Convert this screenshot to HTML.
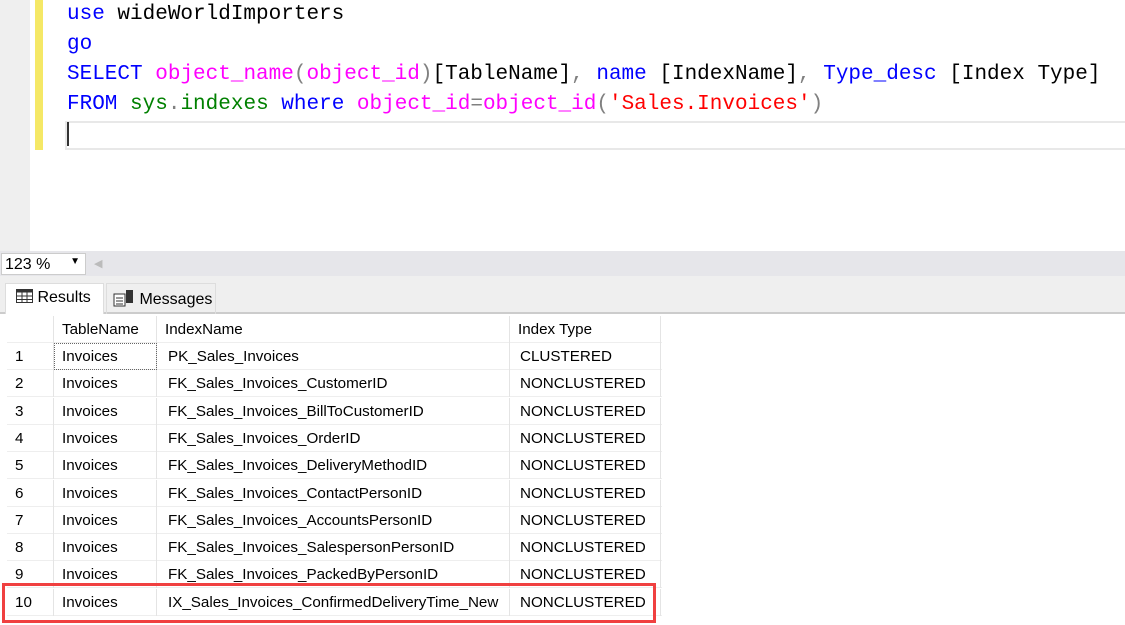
<!DOCTYPE html>
<html><head><meta charset="utf-8"><style>
*{margin:0;padding:0;box-sizing:border-box}
body{width:1125px;height:625px;overflow:hidden;background:#fff;position:relative;font-family:"Liberation Sans",sans-serif}
.gut{position:absolute;left:0;top:0;width:30px;height:251px;background:#efefef}
.yb{position:absolute;left:35px;top:0;width:8px;height:150px;background:#f5e866}
.code{position:absolute;left:67px;font-family:"Liberation Mono",monospace;font-size:21px;line-height:30px;white-space:pre;color:#000}
.k{color:#0000ff}.f{color:#ff00ff}.s{color:#ff0000}.g{color:#008000}.p{color:#808080}
.cur{position:absolute;left:65px;top:121px;width:1060px;height:29px;border:2px solid #e8e8e8;border-right:none}
.caret{position:absolute;left:67px;top:122px;width:2px;height:24px;background:#333}
.tb{position:absolute;left:0;top:251px;width:1125px;height:25px;background:#e6e6ea}
.combo{position:absolute;left:1px;top:253px;width:85px;height:22px;background:#fff;border:1px solid #ccc;font-size:16px;padding:2px 3px;color:#000}
.tabs{position:absolute;left:0;top:276px;width:1125px;height:38px;background:#efefef;border-bottom:2px solid #ccc}
.tab{position:absolute;top:283px;height:31px;font-size:16px;padding-top:5px;color:#000}
.grid{position:absolute;left:6px;top:316px;border-left:1px solid #ccc}
.r{position:absolute;height:27px;border-bottom:1px solid #eee;font-size:15.2px;line-height:27px;color:#000}
.c{position:absolute;top:0;height:27px;border-right:1px solid #e4e4e4;padding-left:8px;white-space:nowrap}
.n{padding-left:11px}.t{padding-left:10px}
.red{position:absolute;left:2px;top:583px;width:654px;height:40px;border:3px solid #f04040}
</style></head><body>
<div class="gut"></div><div class="yb"></div>
<div class="cur"></div><div class="caret"></div>
<div class="code" style="top:0"><span class="k">use</span> wideWorldImporters
<span class="k">go</span>
<span class="k">SELECT</span> <span class="f">object_name</span><span class="p">(</span><span class="f">object_id</span><span class="p">)</span>[TableName]<span class="p">,</span> <span class="k">name</span> [IndexName]<span class="p">,</span> <span class="k">Type_desc</span> [Index Type]
<span class="k">FROM</span> <span class="g">sys</span><span class="p">.</span><span class="g">indexes</span> <span class="k">where</span> <span class="f">object_id</span><span class="p">=</span><span class="f">object_id</span><span class="p">(</span><span class="s">'Sales.Invoices'</span><span class="p">)</span></div>
<div class="tb"></div>
<div class="combo">123 %<span style="position:absolute;right:5px;top:2px;font-size:10px">▼</span></div>
<div style="position:absolute;left:94px;top:257px;color:#bbb;font-size:11px">◀</div>
<div class="tabs"></div>
<div class="tab" style="left:5px;width:99px;background:#fff;border:1px solid #ddd;border-bottom:none;padding-left:10px">
<svg width="17" height="14" style="vertical-align:-1px"><rect x="0.5" y="0.5" width="16" height="13" fill="#fff" stroke="#333"/><rect x="0.5" y="0.5" width="16" height="3" fill="#333"/><path d="M6 1v13M11 1v13M1 7h16M1 10.5h16" stroke="#333"/></svg> Results</div>
<div class="tab" style="left:106px;width:110px;padding-left:6px;border:1px solid #ddd;border-bottom:none">
<svg width="22" height="18" style="vertical-align:-3px"><rect x="1" y="5" width="11" height="12" fill="#fff" stroke="#333"/><path d="M3 9h7M3 12h7M3 15h7" stroke="#333"/><rect x="13" y="1" width="7" height="13" fill="#333"/></svg> Messages</div>
<div class="grid">
<div class="r" style="top:0;width:655px"><div class="c" style="left:0;width:47px"></div><div class="c" style="left:47px;width:103px">TableName</div><div class="c" style="left:150px;width:353px">IndexName</div><div class="c" style="left:503px;width:151px">Index Type</div></div>
</div>
<div class="grid" style="top:343px">
<div class="r" style="top:0;width:655px"><div class="c" style="left:0;width:47px">1</div><div class="c" style="left:47px;width:103px;outline:1px dotted #666;outline-offset:-1px">Invoices</div><div class="c n" style="left:150px;width:353px">PK_Sales_Invoices</div><div class="c t" style="left:503px;width:151px">CLUSTERED</div></div>
<div class="r" style="top:27.3px;width:655px"><div class="c" style="left:0;width:47px">2</div><div class="c" style="left:47px;width:103px">Invoices</div><div class="c n" style="left:150px;width:353px">FK_Sales_Invoices_CustomerID</div><div class="c t" style="left:503px;width:151px">NONCLUSTERED</div></div>
<div class="r" style="top:54.6px;width:655px"><div class="c" style="left:0;width:47px">3</div><div class="c" style="left:47px;width:103px">Invoices</div><div class="c n" style="left:150px;width:353px">FK_Sales_Invoices_BillToCustomerID</div><div class="c t" style="left:503px;width:151px">NONCLUSTERED</div></div>
<div class="r" style="top:81.9px;width:655px"><div class="c" style="left:0;width:47px">4</div><div class="c" style="left:47px;width:103px">Invoices</div><div class="c n" style="left:150px;width:353px">FK_Sales_Invoices_OrderID</div><div class="c t" style="left:503px;width:151px">NONCLUSTERED</div></div>
<div class="r" style="top:109.2px;width:655px"><div class="c" style="left:0;width:47px">5</div><div class="c" style="left:47px;width:103px">Invoices</div><div class="c n" style="left:150px;width:353px">FK_Sales_Invoices_DeliveryMethodID</div><div class="c t" style="left:503px;width:151px">NONCLUSTERED</div></div>
<div class="r" style="top:136.5px;width:655px"><div class="c" style="left:0;width:47px">6</div><div class="c" style="left:47px;width:103px">Invoices</div><div class="c n" style="left:150px;width:353px">FK_Sales_Invoices_ContactPersonID</div><div class="c t" style="left:503px;width:151px">NONCLUSTERED</div></div>
<div class="r" style="top:163.8px;width:655px"><div class="c" style="left:0;width:47px">7</div><div class="c" style="left:47px;width:103px">Invoices</div><div class="c n" style="left:150px;width:353px">FK_Sales_Invoices_AccountsPersonID</div><div class="c t" style="left:503px;width:151px">NONCLUSTERED</div></div>
<div class="r" style="top:191.1px;width:655px"><div class="c" style="left:0;width:47px">8</div><div class="c" style="left:47px;width:103px">Invoices</div><div class="c n" style="left:150px;width:353px">FK_Sales_Invoices_SalespersonPersonID</div><div class="c t" style="left:503px;width:151px">NONCLUSTERED</div></div>
<div class="r" style="top:218.4px;width:655px"><div class="c" style="left:0;width:47px">9</div><div class="c" style="left:47px;width:103px">Invoices</div><div class="c n" style="left:150px;width:353px">FK_Sales_Invoices_PackedByPersonID</div><div class="c t" style="left:503px;width:151px">NONCLUSTERED</div></div>
<div class="r" style="top:245.7px;width:655px"><div class="c" style="left:0;width:47px">10</div><div class="c" style="left:47px;width:103px">Invoices</div><div class="c n" style="left:150px;width:353px">IX_Sales_Invoices_ConfirmedDeliveryTime_New</div><div class="c t" style="left:503px;width:151px">NONCLUSTERED</div></div>
</div>
<div class="red"></div>
</body></html>
